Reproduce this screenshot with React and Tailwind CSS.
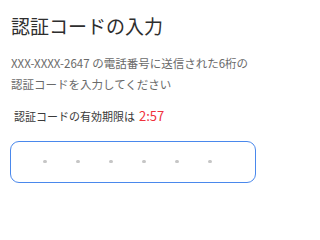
export default function App() {
  const dots = [0, 1, 2, 3, 4, 5];
  return (
    <div className="w-[273px] h-[234px] bg-white font-['Noto_Sans_CJK_JP','Noto_Sans',sans-serif] pl-[11px] pr-[16px] pt-[12px]">
      <h1 className="text-[19px] leading-[28px] font-normal text-[#2e2e2e]">認証コードの入力</h1>
      <p className="mt-[13px] text-[11.5px] leading-[21px] text-[#6a6a6a]">
        XXX-XXXX-2647 の電話番号に送信された6桁の認証コードを入力してください
      </p>
      <div className="mt-[11px] pl-[3px] flex items-baseline gap-[4px]">
        <span className="text-[11px] text-[#3a3a3a]">認証コードの有効期限は</span>
        <span className="text-[13px] text-[#f0313b]">2:57</span>
      </div>
      <div className="mt-[15px] -ml-[1px] w-[246px] h-[42px] rounded-[9px] border-[1.5px] border-[#4a88ec] flex items-center pl-[32px] gap-[29.5px]">
        {dots.map((d) => (
          <span key={d} className="w-[3.5px] h-[3.5px] rounded-full bg-[#c6c6c6]" />
        ))}
      </div>
    </div>
  );
}
